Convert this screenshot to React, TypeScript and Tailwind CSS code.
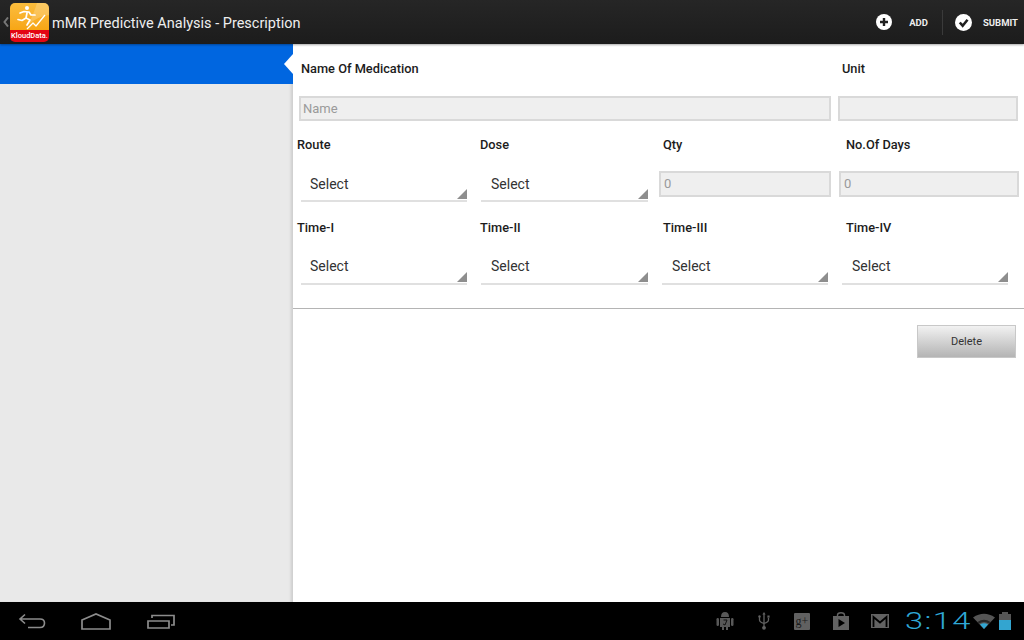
const Label = ({ children, className = "" }: { children: string; className?: string }) => (
  <div className={`pt-[1px] text-[12.8px] font-medium leading-[13px] text-[#1c1c1c] ${className}`}>{children}</div>
);

function Select({ className = "", textTop = "pt-[5px]" }: { className?: string; textTop?: string }) {
  return (
    <div className={`relative h-[32px] border-b-2 border-[#e0e0e0] pl-[9px] text-[14px] leading-[18px] text-[#333] ${textTop} ${className}`}>
      Select
      <span className="absolute bottom-[1px] right-0 h-0 w-0 border-b-[10px] border-l-[10px] border-b-[#8e8e8e] border-l-transparent" />
    </div>
  );
}

function Field({ value = "", className = "" }: { value?: string; className?: string }) {
  return (
    <div className={`flex items-center border-2 border-[#d9d9d9] bg-[#efefef] px-[3px] text-[13px] text-[#9a9a9a] ${className}`}>
      {value}
    </div>
  );
}

function Logo() {
  return (
    <div className="flex h-[39px] w-[39px] shrink-0 flex-col overflow-hidden rounded-[5px]">
      <div className="relative h-[27px] bg-gradient-to-b from-[#fbbd3c] to-[#f7a613]">
        <svg viewBox="0 0 39 27" className="absolute inset-0 h-full w-full">
          <path d="M27 0 L39 0 L39 12 Q28 13 18 22 Q24 10 27 0Z" fill="#fff" opacity="0.2" />
          <circle cx="17" cy="5" r="2" fill="#fff" />
          <path d="M10 10 L14 8.5 L19 9 L21 12 L25 12 M17 10 L16 15 L20 17 L17 22 M16 15 L12 17.5 L8 16.5" fill="none" stroke="#fff" strokeWidth="1.7" strokeLinecap="round" strokeLinejoin="round" />
          <path d="M17 26 L23 20 L26 23 L35 12" fill="none" stroke="#fff" strokeWidth="1.3" strokeLinejoin="round" />
        </svg>
      </div>
      <div className="flex flex-1 items-center justify-center bg-[#e30613] text-[7.5px] font-medium leading-none text-white">KloudData.</div>
    </div>
  );
}

function ActionBar() {
  return (
    <header className="z-10 flex h-[44px] shrink-0 items-center bg-gradient-to-b from-[#262626] to-[#1c1c1c] shadow-[0_1px_2px_rgba(0,0,0,0.35)]">
      <svg viewBox="0 0 6 10" className="ml-[3px] mr-[1px] h-[10px] w-[6px]">
        <path d="M5 0.5 L1.5 5 L5 9.5" fill="none" stroke="#777" strokeWidth="2" />
      </svg>
      <Logo />
      <h1 className="ml-[3px] pt-[3px] text-[14.5px] font-normal text-[#eee]">mMR Predictive Analysis - Prescription</h1>
      <div className="ml-auto flex items-center text-[9.5px] font-bold text-[#eee]">
        <svg viewBox="0 0 16 16" className="h-[16px] w-[16px]">
          <circle cx="8" cy="8" r="8" fill="#fff" />
          <path d="M8 4 V12 M4 8 H12" stroke="#1f1f1f" strokeWidth="2.4" />
        </svg>
        <span className="ml-[17px] pt-[2px]">ADD</span>
        <span className="ml-[14px] h-[25px] w-px bg-[#3a3a3a]" />
        <svg viewBox="0 0 16 16" className="ml-[12px] h-[17px] w-[17px]">
          <circle cx="8" cy="8" r="8" fill="#fff" />
          <path d="M4.5 8 L7.2 11 L11.8 5.4" fill="none" stroke="#1f1f1f" strokeWidth="2.4" />
        </svg>
        <span className="ml-[11px] mr-[6px] pt-[2px]">SUBMIT</span>
      </div>
    </header>
  );
}

function Sidebar() {
  return (
    <aside className="relative w-[293px] shrink-0 bg-[#e9e9e9] shadow-[inset_-3px_0_3px_-1px_rgba(0,0,0,0.12)]">
      <div className="h-[40px] bg-[#0066e0]" />
      <span className="absolute right-0 top-[10px] h-0 w-0 border-y-[10px] border-r-[9px] border-y-transparent border-r-white" />
    </aside>
  );
}

function Form() {
  return (
    <main className="flex-1 bg-white">
      <div className="flex h-[48px] items-center pl-[8px]">
        <Label className="w-[541px]">Name Of Medication</Label>
        <Label>Unit</Label>
      </div>
      <div className="mt-[4px] flex h-[25px] pl-[6px]">
        <Field value="Name" className="w-[532px] !pl-[2px]" />
        <Field className="ml-[7px] w-[180px]" />
      </div>

      <div className="mt-[11px] grid h-[24px] grid-cols-[183px_183px_183px_1fr] items-center pl-[4px]">
        <Label>Route</Label>
        <Label>Dose</Label>
        <Label>Qty</Label>
        <Label>No.Of Days</Label>
      </div>
      <div className="mt-[14px] flex h-[32px] pl-[8px]">
        <Select className="w-[166px]" />
        <Select className="ml-[14px] w-[167px] !pl-[10px]" />
        <Field value="0" className="ml-[11px] mt-px h-[26px] w-[172px]" />
        <Field value="0" className="ml-[8px] mt-px h-[26px] w-[180px]" />
      </div>

      <div className="mt-[13px] grid h-[24px] grid-cols-[183px_183px_183px_1fr] items-center pl-[4px]">
        <Label>Time-I</Label>
        <Label>Time-II</Label>
        <Label>Time-III</Label>
        <Label>Time-IV</Label>
      </div>
      <div className="mt-[14px] flex h-[32px] pl-[8px]">
        <Select className="w-[166px]" textTop="pt-[4px]" />
        <Select className="ml-[14px] w-[167px] !pl-[10px]" textTop="pt-[4px]" />
        <Select className="ml-[14px] w-[166px] !pl-[10px]" textTop="pt-[4px]" />
        <Select className="ml-[14px] w-[166px] !pl-[10px]" textTop="pt-[4px]" />
      </div>

      <div className="mt-[23px] h-px bg-[#b4b4b4]" />
      <div className="mt-[16px] flex justify-end pr-[8px]">
        <button className="h-[33px] w-[99px] border border-[#c8c8c8] bg-gradient-to-b from-[#f2f2f2] to-[#b4b4b4] pt-[2px] text-[11px] text-[#333]">Delete</button>
      </div>
    </main>
  );
}

function NavBar() {
  return (
    <footer className="relative flex h-[38px] shrink-0 items-center bg-black">
      <svg viewBox="0 0 28 16" className="ml-[18px] h-[16px] w-[28px]" fill="none" stroke="#8c8c8c" strokeWidth="1.6">
        <path d="M7 1.5 L2 6 L7 10.5 M2 6 H22 Q26.5 6 26.5 10 Q26.5 14.5 22 14.5 H10" />
      </svg>
      <svg viewBox="0 0 30 17" className="ml-[35px] h-[17px] w-[30px]" fill="none" stroke="#8c8c8c" strokeWidth="1.7">
        <path d="M1 7 L15 1 L29 7 V16 H1Z" />
      </svg>
      <svg viewBox="0 0 28 15" className="ml-[36px] h-[15px] w-[28px]" fill="none" stroke="#8c8c8c" strokeWidth="1.7">
        <path d="M1 7 H22 V14 H1Z M5 4 V1.5 H27 V11 H24" />
      </svg>

      <div className="ml-auto flex items-center">
        <svg viewBox="0 0 18 20" className="h-[20px] w-[18px]" fill="#585858">
          <path d="M5 6 Q5 1 9 1 Q13 1 13 6Z M4 7 H14 V16 H12 V19 H10 V16 H8 V19 H6 V16 H4Z" />
          <rect x="0.5" y="7" width="2.5" height="8" rx="1.2" />
          <rect x="15" y="7" width="2.5" height="8" rx="1.2" />
          <path d="M7.5 9 L11 9 L9 14 L7 13" fill="none" stroke="#111" strokeWidth="1" />
        </svg>
        <svg viewBox="0 0 12 18" className="ml-[24px] h-[18px] w-[12px]" fill="none" stroke="#626262" strokeWidth="1.3">
          <path d="M6 2 V15 M1.5 5 V8 Q1.5 10 6 11.5 Q10.5 10 10.5 8 V6" />
          <path d="M6 0 L4.4 2.5 H7.6Z" fill="#626262" stroke="none" />
          <circle cx="1.5" cy="4.5" r="1.2" fill="#626262" stroke="none" />
          <rect x="9.4" y="3.5" width="2.2" height="2.2" fill="#626262" stroke="none" />
          <circle cx="6" cy="15.8" r="1.9" fill="#626262" stroke="none" />
        </svg>
        <div className="ml-[24px] flex h-[17px] w-[16px] items-center justify-center rounded-[1px] bg-[#616161] font-['Liberation_Serif',serif] text-[12px] leading-none text-[#1b1b1b]">g+</div>
        <svg viewBox="0 0 16 18" className="ml-[23px] h-[18px] w-[16px]">
          <path d="M0 4 H16 V18 H0Z" fill="#626262" />
          <path d="M4.5 5 V3 Q4.5 0.7 8 0.7 Q11.5 0.7 11.5 3 V5" fill="none" stroke="#626262" strokeWidth="1.4" />
          <path d="M5.5 7 L12 11 L5.5 15Z" fill="#000" />
        </svg>
        <svg viewBox="0 0 18 14" className="ml-[22px] h-[14px] w-[18px]">
          <path d="M0 0 H18 V14 H0Z" fill="#626262" />
          <path d="M2.5 13 V3 L9 8.5 L15.5 3 V13" fill="none" stroke="#000" strokeWidth="1.8" />
        </svg>
        <span className="ml-[16px] w-[66px] origin-left scale-x-[1.42] text-[23px] font-light leading-none tracking-[1px] text-[#2fa8d6]">3:14</span>
        <svg viewBox="0 0 22 16" className="ml-[2px] h-[16px] w-[22px]">
          <path d="M0 4.5 Q11 -3 22 4.5 L11 16Z" fill="#555" />
          <path d="M4.5 9 Q11 4.5 17.5 9 L16 10.5 Q11 7.5 6 10.5Z" fill="#262626" />
          <path d="M7 11.5 Q11 9 15 11.5 L11 16Z" fill="#33a5d0" />
        </svg>
        <div className="ml-[4px] mr-[13px] flex h-[18px] w-[12px] flex-col">
          <div className="mx-auto h-[2px] w-[6px] bg-[#555]" />
          <div className="h-[6px] bg-[#555]" />
          <div className="flex-1 bg-[#33a5d0]" />
        </div>
      </div>
    </footer>
  );
}

export default function App() {
  return (
    <div className="flex h-[640px] w-[1024px] flex-col overflow-hidden font-['Roboto',sans-serif]">
      <ActionBar />
      <div className="flex flex-1">
        <Sidebar />
        <Form />
      </div>
      <NavBar />
    </div>
  );
}
